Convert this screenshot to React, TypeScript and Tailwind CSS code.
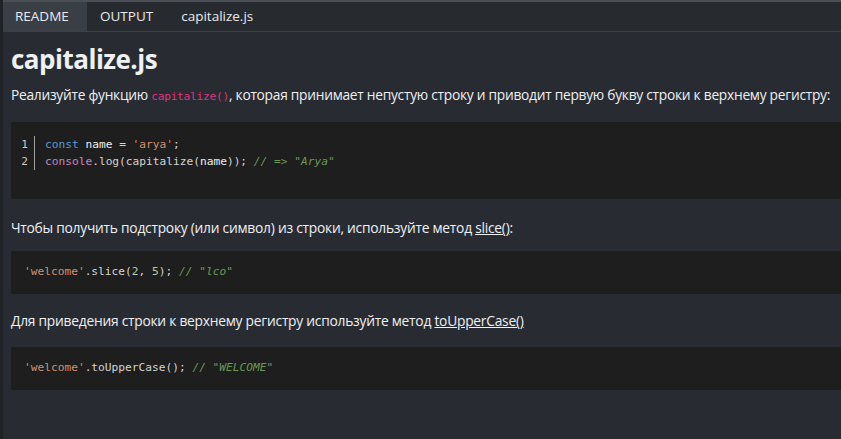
import React from 'react';

const mono = { fontFamily: '"DejaVu Sans Mono", "Liberation Mono", monospace' };

function Code({ children }: { children: React.ReactNode }) {
    return (
        <code className="text-[11.2px] text-[#d9367f]" style={mono}>
            {children}
        </code>
    );
}

export default function App() {
    const tabs = ['README', 'OUTPUT', 'capitalize.js'];

    return (
        <div
            className="w-[841px] h-[439px] overflow-hidden bg-[#282c32] border-l-[3px] border-[#1f2226] flex flex-col"
            style={{ fontFamily: '"Open Sans", "Noto Sans", sans-serif' }}
        >
            {/* Tabs */}
            <div className="border-t-2 border-[#4b4f55] border-b border-b-[#3d4147] flex h-[32px] shrink-0 bg-[#272b30]">
                {tabs.map((t, i) => (
                    <div
                        key={t}
                        className={`flex items-center text-[13.5px] text-[#e8eaed] ${i === 0 ? 'bg-[#3a3f46] px-[12px] w-[84px]' : i === 1 ? 'px-[13px]' : 'px-[15px]'}`}
                    >
                        {t}
                    </div>
                ))}
            </div>

            {/* Content */}
            <div className="pl-[8px] text-[#eef0f2]">
                <h1 className="text-[26px] font-bold leading-none mt-[14px] tracking-[-0.5px]">capitalize.js</h1>
                <p className="text-[13.75px] mt-[13px] leading-[20px] tracking-[-0.26px] whitespace-nowrap">
                    Реализуйте функцию <Code>capitalize()</Code>, которая принимает непустую строку и приводит первую букву строки к верхнему регистру:
                </p>

                <div className="bg-[#1e1e1e] mt-[15px] h-[77px] pt-[14px] text-[11.2px] leading-[17px]" style={mono}>
                    <div className="flex">
                        <div className="w-[24px] pr-[6px] text-right text-[#c8c8c8] border-r border-[#a0a0a0] mr-[10px]">
                            <div>1</div>
                            <div>2</div>
                        </div>
                        <div className="text-[#d4d4d4]">
                            <div>
                                <span className="text-[#569cd6]">const</span> <span className="text-[#f0f0f0]">name</span> = <span className="text-[#ce9178]">'arya'</span>;
                            </div>
                            <div>
                                <span className="text-[#c586c0]">console</span>.log(capitalize(<span className="text-[#f0f0f0]">name</span>)); <span className="text-[#6a9955] italic">// =&gt; "Arya"</span>
                            </div>
                        </div>
                    </div>
                </div>

                <p className="text-[13.8px] mt-[19px] leading-[20px] tracking-[-0.25px]">
                    Чтобы получить подстроку (или символ) из строки, используйте метод <span className="underline">slice()</span>:
                </p>

                <div className="bg-[#1e1e1e] mt-[13px] h-[43px] flex items-center pl-[13px] text-[11.2px] text-[#d4d4d4] whitespace-pre" style={mono}>
                    <span className="text-[#ce9178]">'welcome'</span>
                    {'.slice('}
                    <span className="text-[#b5cea8]">2</span>
                    {', '}
                    <span className="text-[#b5cea8]">5</span>
                    {'); '}
                    <span className="text-[#6a9955] italic">// "lco"</span>
                </div>

                <p className="text-[13.8px] mt-[17px] leading-[20px] tracking-[-0.25px]">
                    Для приведения строки к верхнему регистру используйте метод <span className="underline">toUpperCase()</span>
                </p>

                <div className="bg-[#1e1e1e] mt-[16px] h-[43px] flex items-center pl-[13px] text-[11.2px] text-[#d4d4d4] whitespace-pre" style={mono}>
                    <span className="text-[#ce9178]">'welcome'</span>
                    {'.toUpperCase(); '}
                    <span className="text-[#6a9955] italic">// "WELCOME"</span>
                </div>
            </div>
        </div>
    );
}
